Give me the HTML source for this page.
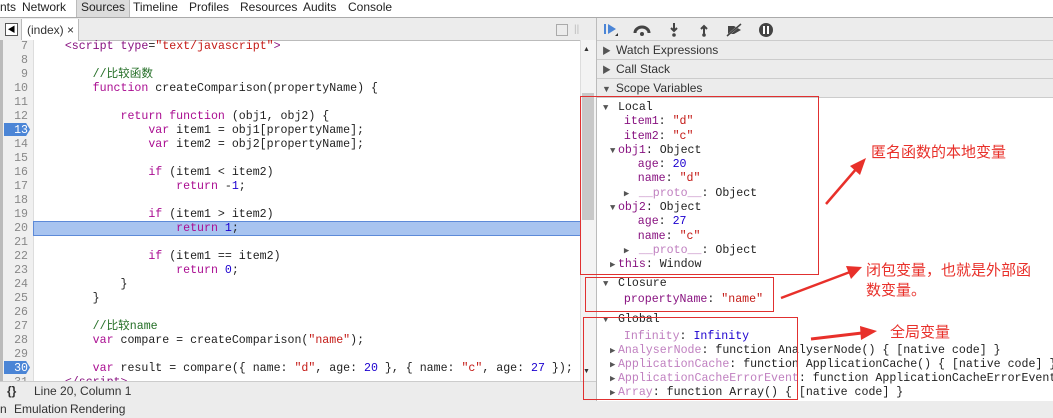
<!DOCTYPE html><html><head><style>
body{margin:0;width:1053px;height:418px;overflow:hidden;background:#fff;font-family:"Liberation Sans","Noto Sans CJK SC",sans-serif;position:relative}
.a{position:absolute}
.mono{font-family:"Liberation Mono","Noto Sans CJK SC",monospace;font-size:11.6px;white-space:pre}
.ln{position:absolute;left:0;width:28px;text-align:right;color:#888;font-size:11.6px;font-family:"Liberation Mono",monospace}
.k{color:#aa0d91}.s{color:#c41a16}.c{color:#236e25}.n{color:#1c00cf}.t{color:#881280}
.hdr{position:absolute;left:597px;width:456px;height:18px;background:#ececec;border-bottom:1px solid #ccc;font-size:12px;line-height:18px;color:#333}
.sc{position:absolute;font-family:"Liberation Mono",monospace;font-size:11.6px;white-space:pre;line-height:14.3px;color:#222}
.p{color:#881280}.g{color:#c080c0}
.ar{font-size:9px;color:#555;display:inline-block;width:8px}
.red{position:absolute;border:1px solid #e03030}
.rt{position:absolute;color:#e8302a;font-size:15px;line-height:20px}
</style></head><body>
<div class="a" style="left:0;top:0;width:1053px;height:17px;font-size:12px;line-height:15px;color:#222;border-bottom:1px solid #aaa">
<span class="a" style="left:0">nts</span><span class="a" style="left:22px">Network</span><span class="a" style="left:76px;top:0;height:17px;background:#dcdcdc;padding:0 4px;border-left:1px solid #bbb;border-right:1px solid #bbb">Sources</span><span class="a" style="left:133px">Timeline</span><span class="a" style="left:189px">Profiles</span><span class="a" style="left:240px">Resources</span><span class="a" style="left:303px">Audits</span><span class="a" style="left:348px">Console</span></div>
<div class="a" style="left:0;top:18px;width:596px;height:22px;background:#ececec;border-bottom:1px solid #bbb"></div>
<div class="a" style="left:5px;top:23px;width:11px;height:11px;border:1px solid #555;background:#fff;font-size:8px;line-height:11px;text-align:center">◀</div>
<div class="a" style="left:21px;top:19px;width:51px;height:22px;background:#fff;border-left:1px solid #bbb;border-right:1px solid #bbb;font-size:12px;line-height:22px;color:#333;padding-left:5px">(index) ×</div>
<div class="a" style="left:556px;top:24px;width:10px;height:10px;border:1px solid #aaa"></div>
<div class="a" style="left:574px;top:24px;color:#bbb;font-size:10px">||</div>
<div class="a" style="left:0;top:40px;width:33px;height:341px;background:#f0f0f0;border-right:1px solid #ddd"></div>
<div class="a" style="left:0;top:40px;width:3px;height:341px;background:#bbb"></div>
<div class="a" style="left:33px;top:221px;width:546px;height:13px;background:#a8c4f0;border:1px solid #5d8ad8"></div>
<div class="a" style="left:4px;top:123px;width:26px;height:13px;background:#4b85d6;clip-path:polygon(0 0,85% 0,100% 50%,85% 100%,0 100%)"></div>
<div class="a" style="left:4px;top:361px;width:26px;height:13px;background:#4b85d6;clip-path:polygon(0 0,85% 0,100% 50%,85% 100%,0 100%)"></div>
<div class="a" style="left:0;top:40px;width:579px;height:341px;overflow:hidden">
<div style="position:relative;top:0px;line-height:14px">
<div class="ln" style="top:0">7</div><div class="ln" style="top:14px">8</div><div class="ln" style="top:28px">9</div><div class="ln" style="top:42px">10</div><div class="ln" style="top:56px">11</div><div class="ln" style="top:70px">12</div><div class="ln" style="top:84px;color:#fff">13</div><div class="ln" style="top:98px">14</div><div class="ln" style="top:112px">15</div><div class="ln" style="top:126px">16</div><div class="ln" style="top:140px">17</div><div class="ln" style="top:154px">18</div><div class="ln" style="top:168px">19</div><div class="ln" style="top:182px">20</div><div class="ln" style="top:196px">21</div><div class="ln" style="top:210px">22</div><div class="ln" style="top:224px">23</div><div class="ln" style="top:238px">24</div><div class="ln" style="top:252px">25</div><div class="ln" style="top:266px">26</div><div class="ln" style="top:280px">27</div><div class="ln" style="top:294px">28</div><div class="ln" style="top:308px">29</div><div class="ln" style="top:322px;color:#fff">30</div><div class="ln" style="top:336px">31</div>
<div class="mono a" style="left:37px;top:0;color:#222;line-height:14px">    <span class="t">&lt;script</span> <span class="t">type</span>=<span class="s">"text/javascript"</span><span class="t">&gt;</span>

        <span class="c">//比较函数</span>
        <span class="k">function</span> createComparison(propertyName) {

            <span class="k">return</span> <span class="k">function</span> (obj1, obj2) {
                <span class="k">var</span> item1 = obj1[propertyName];
                <span class="k">var</span> item2 = obj2[propertyName];

                <span class="k">if</span> (item1 &lt; item2)
                    <span class="k">return</span> -<span class="n">1</span>;

                <span class="k">if</span> (item1 &gt; item2)
                    <span class="k">return</span> <span class="n">1</span>;

                <span class="k">if</span> (item1 == item2)
                    <span class="k">return</span> <span class="n">0</span>;
            }
        }

        <span class="c">//比较name</span>
        <span class="k">var</span> compare = createComparison(<span class="s">"name"</span>);

        <span class="k">var</span> result = compare({ name: <span class="s">"d"</span>, age: <span class="n">20</span> }, { name: <span class="s">"c"</span>, age: <span class="n">27</span> });
    <span class="t">&lt;/script&gt;</span></div></div></div>
<div class="a" style="left:580px;top:40px;width:16px;height:341px;background:#f3f3f3;border-left:1px solid #ddd"></div>
<div class="a" style="left:582px;top:93px;width:12px;height:127px;background:#c8c8c8"></div>
<div class="a" style="left:583px;top:46px;font-size:7px;color:#333">▲</div>
<div class="a" style="left:583px;top:368px;font-size:7px;color:#333">▼</div>
<div class="a" style="left:0;top:381px;width:596px;height:19px;background:#ececec;border-top:1px solid #ccc;border-bottom:1px solid #aaa;font-size:12px;line-height:19px;color:#333"><span class="a" style="left:7px;font-weight:bold">{}</span><span class="a" style="left:34px">Line 20, Column 1</span></div>
<div class="a" style="left:0;top:401px;width:1053px;height:17px;background:#ececec;font-size:12px;line-height:17px;color:#333"><span class="a" style="left:0">n</span><span class="a" style="left:14px">Emulation</span><span class="a" style="left:70px">Rendering</span></div>
<div class="a" style="left:596px;top:18px;width:1px;height:383px;background:#bbb"></div>
<div class="a" style="left:597px;top:18px;width:456px;height:22px;background:#ececec;border-bottom:1px solid #ccc"></div>
<svg class="a" style="left:600px;top:20px" width="180" height="20">
<rect x="4" y="4" width="2" height="10" fill="#4b85d6"/><path d="M8 4 L16 9 L8 14Z" fill="#4b85d6"/><path d="M15 16l3-3v3z" fill="#333"/>
<path d="M35 13 a7 6 0 0 1 14 0" stroke="#444" stroke-width="3" fill="none"/><circle cx="42" cy="14" r="2" fill="#444"/>
<path d="M74 3v7M71 8l3 3 3-3" stroke="#444" stroke-width="2" fill="none"/><circle cx="74" cy="15" r="1.8" fill="#444"/>
<path d="M104 14V7M101 9l3-3 3 3" stroke="#444" stroke-width="2" fill="none"/><circle cx="104" cy="15" r="1.8" fill="#444"/>
<path d="M128 6h6l7 4-7 4h-6z" fill="#444"/><path d="M126 17l16-14" stroke="#ececec" stroke-width="2"/><path d="M127 16l14-12" stroke="#444" stroke-width="1.5"/>
<circle cx="166" cy="10" r="7" fill="#444"/><rect x="163" y="6" width="2" height="8" fill="#fff"/><rect x="167" y="6" width="2" height="8" fill="#fff"/>
</svg>
<div class="hdr" style="top:41px"><span style="font-size:9px;color:#555;margin:0 5px 0 5px">▶</span>Watch Expressions</div>
<div class="hdr" style="top:60px"><span style="font-size:9px;color:#555;margin:0 5px 0 5px">▶</span>Call Stack</div>
<div class="hdr" style="top:79px"><span style="font-size:9px;color:#555;margin:0 5px 0 5px">▼</span>Scope Variables</div>
<div class="a" style="left:597px;top:98px;width:456px;height:303px;overflow:hidden">
<div class="sc" style="left:6px;top:3px"><span class="ar">▼</span> Local
   <span class="p">item1</span>: <span class="s">"d"</span>
   <span class="p">item2</span>: <span class="s">"c"</span>
 <span class="ar">▼</span><span class="p">obj1</span>: Object
     <span class="p">age</span>: <span class="n">20</span>
     <span class="p">name</span>: <span class="s">"d"</span>
   <span class="ar">▶</span> <span class="g">__proto__</span>: Object
 <span class="ar">▼</span><span class="p">obj2</span>: Object
     <span class="p">age</span>: <span class="n">27</span>
     <span class="p">name</span>: <span class="s">"c"</span>
   <span class="ar">▶</span> <span class="g">__proto__</span>: Object
 <span class="ar">▶</span><span class="p">this</span>: Window</div>
<div class="sc" style="left:6px;top:179px"><span class="ar">▼</span> Closure</div>
<div class="sc" style="left:6px;top:195px">   <span class="p">propertyName</span>: <span class="s">"name"</span></div>
<div class="sc" style="left:6px;top:215px;line-height:14px"><span class="ar">▼</span> Global</div>
<div class="sc" style="left:6px;top:232px;line-height:14px">   <span class="g">Infinity</span>: <span class="n">Infinity</span>
 <span class="ar">▶</span><span class="g">AnalyserNode</span>: function AnalyserNode() { [native code] }
 <span class="ar">▶</span><span class="g">ApplicationCache</span>: function ApplicationCache() { [native code] }
 <span class="ar">▶</span><span class="g">ApplicationCacheErrorEvent</span>: function ApplicationCacheErrorEvent() { [native code] }
 <span class="ar">▶</span><span class="g">Array</span>: function Array() { [native code] }</div></div>
<div class="red" style="left:580px;top:96px;width:237px;height:177px"></div>
<div class="red" style="left:585px;top:277px;width:187px;height:33px"></div>
<div class="red" style="left:583px;top:317px;width:213px;height:81px"></div>
<div class="rt" style="left:871px;top:143px">匿名函数的本地变量</div>
<div class="rt" style="left:866px;top:261px">闭包变量，也就是外部函<br>数变量。</div>
<div class="rt" style="left:890px;top:323px">全局变量</div>
<svg class="a" style="left:0;top:0" width="1053" height="418">
<path d="M826 204 L857 168" stroke="#e8302a" stroke-width="2.5"/><path d="M866 158 L850 166 L860 175Z" fill="#e8302a"/>
<path d="M781 298 L850 272" stroke="#e8302a" stroke-width="2.5"/><path d="M862 267 L846 266 L851 279Z" fill="#e8302a"/>
<path d="M811 339 L862 333" stroke="#e8302a" stroke-width="3"/><path d="M877 331 L860 326 L861 340Z" fill="#e8302a"/>
</svg>
</body></html>
